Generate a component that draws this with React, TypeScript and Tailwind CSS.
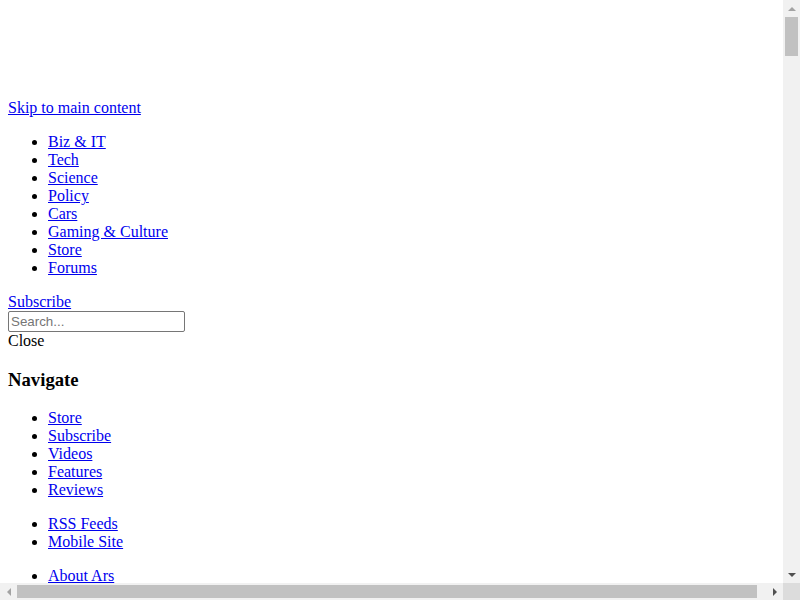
import React from "react";

// Unstyled page: the site's CSS never loaded, so this is browser defaults,
// shown inside a window frame with classic scrollbars.
const SECTIONS = ["Biz & IT", "Tech", "Science", "Policy", "Cars", "Gaming & Culture", "Store", "Forums"];
const NAV_GROUPS = [
  ["Store", "Subscribe", "Videos", "Features", "Reviews"],
  ["RSS Feeds", "Mobile Site"],
  ["About Ars", "Staff Directory", "Contact Us"],
];

const link = "text-[#0000ee] underline";

function LinkList({ items, className = "my-4" }: { items: string[]; className?: string }) {
  return (
    <ul className={`list-disc pl-10 ${className}`}>
      {items.map((item) => (
        <li key={item}>
          <a href="#" className={link}>
            {item}
          </a>
        </li>
      ))}
    </ul>
  );
}

function Arrow({ dir, dim }: { dir: "up" | "down" | "left" | "right"; dim?: boolean }) {
  const pts = {
    up: "4,1 8,5 0,5",
    down: "0,1 8,1 4,5",
    left: "5,0 5,8 1,4",
    right: "1,0 1,8 5,4",
  }[dir];
  const vertical = dir === "up" || dir === "down";
  return (
    <div className="flex h-[17px] w-[17px] shrink-0 items-center justify-center bg-[#f1f1f1]">
      <svg width={vertical ? 8 : 6} height={vertical ? 6 : 8} viewBox={vertical ? "0 0 8 6" : "0 0 6 8"}>
        <polygon points={pts} fill={dim ? "#a3a3a3" : "#505050"} />
      </svg>
    </div>
  );
}

export default function App() {
  return (
    <div className="flex h-[600px] w-[800px] flex-col overflow-hidden bg-white">
      <div className="flex h-[583px] shrink-0">
        <div className="min-w-0 flex-1 overflow-hidden p-2 font-['Liberation_Serif','Times_New_Roman',serif] text-[16px] leading-[18px] text-black">
          {/* logo slot that rendered empty */}
          <div className="h-[91px]" />

          <a href="#" className={link}>
            Skip to main content
          </a>

          <LinkList items={SECTIONS} />

          <div>
            <a href="#" className={link}>
              Subscribe
            </a>
          </div>
          <input
            type="text"
            placeholder="Search..."
            className="block h-[21px] w-[177px] rounded-[2px] border border-[#767676] px-[2px] font-['Liberation_Sans',Arial,sans-serif] text-[13.33px] leading-[normal] placeholder:text-[#757575]"
          />
          <div>Close</div>

          <h3 className="my-[18.72px] text-[18.72px] leading-[21.5px] font-bold">Navigate</h3>

          <LinkList items={NAV_GROUPS[0]} className="mb-4" />
          <LinkList items={NAV_GROUPS[1]} />
          <LinkList items={NAV_GROUPS[2]} />
        </div>

        {/* vertical scrollbar */}
        <div className="flex w-[17px] shrink-0 flex-col bg-[#f1f1f1]">
          <Arrow dir="up" dim />
          <div className="flex-1">
            <div className="mx-[2px] h-[39px] bg-[#c1c1c1]" />
          </div>
          <Arrow dir="down" />
        </div>
      </div>

      {/* horizontal scrollbar */}
      <div className="flex h-[17px] shrink-0 bg-[#f1f1f1]">
        <Arrow dir="left" dim />
        <div className="flex-1 py-[2px]">
          <div className="h-full w-[740px] bg-[#c1c1c1]" />
        </div>
        <Arrow dir="right" />
        <div className="h-[17px] w-[17px] shrink-0 bg-[#dcdcdc]" />
      </div>
    </div>
  );
}
